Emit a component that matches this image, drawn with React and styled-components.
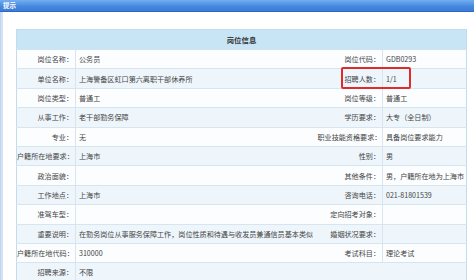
import React from "react";
import styled, { createGlobalStyle } from "styled-components";

const Global = createGlobalStyle`
  html, body { margin: 0; padding: 0; background: #fff; }
  body { width: 474px; height: 280px; overflow: hidden; font-family: "Noto Sans CJK SC", "Noto Sans", sans-serif; }
`;

const Window = styled.div`
  width: 474px;
  height: 280px;
  display: flex;
  flex-direction: column;
  overflow: hidden;
`;

const TitleBar = styled.div`
  height: 11px;
  flex: none;
  background: linear-gradient(#74aef0, #4587de 60%, #3b7cd6);
  border-bottom: 1px solid #2f68bd;
  color: #fff;
  font-size: 6.5px;
  line-height: 11px;
  padding-left: 3px;
  font-weight: bold;
`;

const Body = styled.div`
  flex: 1;
  display: flex;
  min-height: 0;
`;

const Frame = styled.div`
  width: 2px;
  flex: none;
  background: #d3e3f4;
  border-left: 1px solid #c0d6ee;
`;

const Content = styled.div`
  flex: 1;
  padding: 17px 8px 0 13px;
`;

const Table = styled.table`
  width: 450px;
  border-collapse: collapse;
  table-layout: fixed;
  font-size: 7.1px;
  color: #444;
  border: 1px solid #c3dcec;
`;

const HeadCell = styled.th`
  height: 19px;
  padding: 0;
  background: #c8e5f6;
  font-weight: bold;
  font-size: 7.4px;
  color: #333;
  text-align: center;
  border-bottom: 1px solid #d0e2ee;
`;

const Row = styled.tr`
  height: 19.4px;
  background: ${(p) => (p.$alt ? "#eef6fc" : "#fbfdff")};
`;

const Label = styled.td`
  position: relative;
  padding: 0 2px 0 0;
  text-align: right;
  white-space: nowrap;
  border: 1px solid #d6e5f0;
  border-left: none;
`;

const Value = styled.td`
  padding: 0 0 0 3px;
  white-space: nowrap;
  overflow: hidden;
  border: 1px solid #d6e5f0;
  border-right: none;
`;

const Highlight = styled.div`
  position: absolute;
  left: 23px;
  top: -2px;
  width: 66px;
  height: 18px;
  border: 2px solid #df2b2b;
  border-radius: 2px;
  pointer-events: none;
`;

const rows = [
  ["岗位名称：", "公务员", "岗位代码：", "GDB0293"],
  ["单位名称：", "上海警备区虹口第六离职干部休养所", "招聘人数：", "1/1", true],
  ["岗位类型：", "普通工", "岗位等级：", "普通工"],
  ["从事工作：", "老干部勤务保障", "学历要求：", "大专（全日制）"],
  ["专业：", "无", "职业技能资格要求：", "具备岗位要求能力"],
  ["户籍所在地要求：", "上海市", "性别：", "男"],
  ["政治面貌：", "", "其他条件：", "男，户籍所在地为上海市"],
  ["工作地点：", "上海市", "咨询电话：", "021-81801539"],
  ["准驾车型：", "", "定向招考对象：", ""],
  ["重要说明：", "在勤务岗位从事服务保障工作，岗位性质和待遇与收发员兼通信员基本类似", "婚姻状况要求：", ""],
  ["户籍所在地代码：", "310000", "考试科目：", "理论考试"],
];

export default function App() {
  return (
    <>
      <Global />
      <Window>
        <TitleBar>提示</TitleBar>
        <Body>
          <Frame />
          <Content>
            <Table>
              <colgroup>
                <col style={{ width: 59 }} />
                <col style={{ width: 242 }} />
                <col style={{ width: 65 }} />
                <col style={{ width: 84 }} />
              </colgroup>
              <thead>
                <tr>
                  <HeadCell colSpan={4}>岗位信息</HeadCell>
                </tr>
              </thead>
              <tbody>
                {rows.map((r, i) => (
                  <Row key={i} $alt={i % 2 === 1}>
                    <Label>{r[0]}</Label>
                    <Value>{r[1]}</Value>
                    <Label>
                      {r[2]}
                      {r[4] && <Highlight />}
                    </Label>
                    <Value>{r[3]}</Value>
                  </Row>
                ))}
                <Row $alt>
                  <Label>招聘来源：</Label>
                  <Value colSpan={3}>不限</Value>
                </Row>
              </tbody>
            </Table>
          </Content>
        </Body>
      </Window>
    </>
  );
}
